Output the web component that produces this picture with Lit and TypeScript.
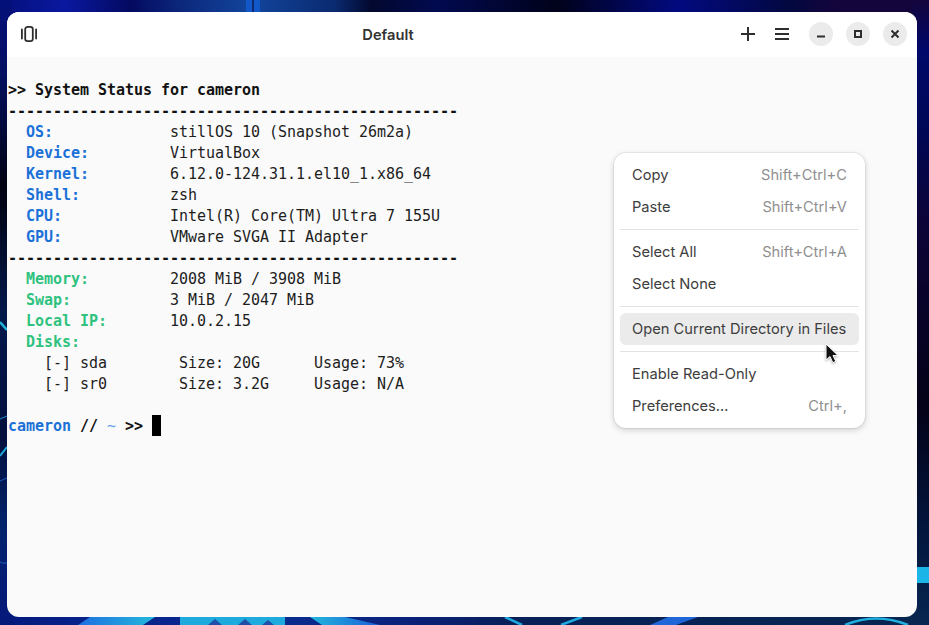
import { LitElement, html, css, svg } from "lit";
import { customElement } from "lit/decorators.js";

const blue = (t: string) => html`<span class="b">${t}</span>`;
const green = (t: string) => html`<span class="g">${t}</span>`;
const dash = "-".repeat(50);

const stops = (list: [number, string][]) =>
  list.map(([o, c]) => svg`<stop offset=${o} stop-color=${c}></stop>`);

@customElement("app-root")
export class AppRoot extends LitElement {
  static styles = css`
    :host { display: block; width: 929px; height: 625px; overflow: hidden; position: relative; background: #04103f; }
    .wall { position: absolute; inset: 0; width: 929px; height: 625px; }
    .page { position: relative; box-sizing: border-box; height: 625px; padding: 12px 12px 8px 7px; display: flex; }
    .window { flex: 1; display: flex; flex-direction: column; border-radius: 12px; overflow: hidden; background: #fafafa; position: relative; }
    .header { height: 45px; box-sizing: border-box; flex: none; background: #fff; display: flex; align-items: center; color: #2e2e2e; padding: 0 10px 1px 14px; }
    .title { flex: 1; padding: 2px 2px 0 0; text-align: center; font: 600 14.667px "Inter", sans-serif; color: #333; }
    .icon { display: block; }
    .plus { margin-right: 20px; }
    .menu-i { margin-right: 20px; }
    .circle { width: 24px; height: 24px; border-radius: 50%; background: #ebebeb; display: flex; align-items: center; justify-content: center; margin-right: 13px; }
    .circle.last { margin-right: 0; }
    pre { margin: 0; padding: 23px 0 0 1px; font: 15px/21px "DejaVu Sans Mono", monospace; color: #1d1d1d; letter-spacing: -0.03px; }
    .h { font-weight: 700; color: #111; }
    .b { color: #1c71d8; font-weight: 700; }
    .g { color: #2ec27e; font-weight: 700; }
    .t { color: #62a0ea; }
    .cursor { display: inline-block; width: 9px; height: 21px; margin-top: -1px; background: #000; vertical-align: top; }
    .popup { position: absolute; left: 607px; top: 141px; width: 251px; box-sizing: border-box; background: #fff; border-radius: 12px;
      padding: 6px; box-shadow: 0 0 0 1px rgba(0,0,0,.05), 0 2px 6px rgba(0,0,0,.18); font: 14.667px "Inter", sans-serif; color: #3d3d3d; }
    .item { height: 32px; box-sizing: border-box; padding: 0 12px 1px; display: flex; align-items: center; justify-content: space-between; border-radius: 6px; white-space: nowrap; }
    .item span { color: #8f8f8f; }
    .sep { height: 1px; background: #e3e3e3; margin: 6px 0; }
    .item.on { background: #ebebeb; }
    .pointer { position: absolute; left: 818px; top: 331px; width: 14px; height: 23px; filter: drop-shadow(0 1px 1px rgba(0,0,0,.3)); }
  `;

  render() {
    return html`
      <svg class="wall" viewBox="0 0 929 625" aria-hidden="true">
        ${svg`
          <defs>
            <linearGradient id="top">${stops([[0, "#04107a"], [0.07, "#0a18a0"], [0.14, "#040a60"], [0.2, "#0c2a7e"], [0.27, "#12459c"], [0.36, "#0a2a70"], [0.4, "#02082e"], [0.47, "#020a50"], [0.6, "#01021a"], [0.73, "#020a80"], [0.85, "#030840"], [0.9, "#14053c"], [1, "#14053c"]])}</linearGradient>
            <linearGradient id="bot">${stops([[0, "#05187a"], [0.08, "#06208a"], [0.3, "#0a2c90"], [0.45, "#0a2078"], [0.55, "#072058"], [1, "#072650"]])}</linearGradient>
            <linearGradient id="left" x1="0" y1="0" x2="0" y2="1">${stops([[0, "#04107a"], [0.12, "#041060"], [0.3, "#010210"], [0.5, "#03184a"], [0.7, "#03103e"], [0.85, "#03236e"], [1, "#05187a"]])}</linearGradient>
            <linearGradient id="right" x1="0" y1="0" x2="0" y2="1">${stops([[0, "#14053c"], [0.08, "#00086a"], [0.2, "#000858"], [0.35, "#0c0438"], [0.65, "#040218"], [0.85, "#03163e"], [1, "#072650"]])}</linearGradient>
            <linearGradient id="c1">${stops([[0, "#1d6fe0"], [1, "#24b8dc"]])}</linearGradient>
            <linearGradient id="c2">${stops([[0, "#22b6dc"], [1, "#1a5fd8"]])}</linearGradient>
          </defs>
          <rect x="0" y="0" width="929" height="16" fill="url(#top)"/>
          <rect x="0" y="612" width="929" height="13" fill="url(#bot)"/>
          <rect x="0" y="0" width="12" height="625" fill="url(#left)"/>
          <rect x="912" y="0" width="17" height="625" fill="url(#right)"/>
          <path d="M246 0h14v12h-14z" fill="#1358c8"/>
          <path d="M252 0h2v12h-2z" fill="#0c2a70"/>
          <path d="M0 322 L7 330" stroke="#22b4d8" stroke-width="2.5" fill="none"/>
          <path d="M0 419 L7 416" stroke="#1a8fd0" stroke-width="1" fill="none"/>
          <path d="M0 456 L7 447" stroke="#1ca8d8" stroke-width="2" fill="none"/>
          <path d="M7 478 Q2 480 0 481 M0 562 Q3 564 7 563" stroke="#1a5cb8" stroke-width="1" fill="none"/>
          <path d="M917 567 H929 V583 H917 Z" fill="#1cb5e8"/>
          <path d="M78 625 L90 617 H155 L143 625 Z" fill="url(#c1)"/>
          <path d="M180 617 H285 V625 H180 Z" fill="#1eaadc"/>
          <path d="M208 625 L215 619 L222 625 Z M238 625 L245 619 L252 625 Z M262 625 L268 620 L274 625 Z" fill="#1f4fa8"/>
          <path d="M310 617 H345 L380 625 H322 Z" fill="url(#c2)"/>
          <path d="M505 617 L522 625 M582 617 L561 625" stroke="#1ea8e0" stroke-width="2.5" fill="none"/>
          <path d="M650 625 L668 617 H698 L676 625 Z" fill="#1f66d8"/>
          <path d="M845 625 Q876 612 908 625" stroke="#1fb0e0" stroke-width="2.5" fill="none"/>
        `}
      </svg>
      <div class="page">
        <div class="window">
          <div class="header">
            <svg class="icon" width="16" height="16" viewBox="0 0 16 16" fill="none" stroke="#2e2e2e" stroke-width="1.8">
              <rect x="4.2" y="0.9" width="7.6" height="14.2" rx="2.4"/>
              <path d="M.9 3.5v9M15.1 3.5v9" stroke-linecap="round"/>
            </svg>
            <div class="title">Default</div>
            <svg class="icon plus" width="14" height="14" viewBox="0 0 14 14" stroke="#2e2e2e" stroke-width="2"><path d="M7 0v14M0 7h14"/></svg>
            <svg class="icon menu-i" width="14" height="14" viewBox="0 0 14 14" stroke="#2e2e2e" stroke-width="2"><path d="M0 2h14M0 7h14M0 12h14"/></svg>
            <div class="circle"><svg width="10" height="10" viewBox="0 0 10 10" stroke="#2e2e2e" stroke-width="2"><path d="M1 7.5h8"/></svg></div>
            <div class="circle"><svg width="10" height="10" viewBox="0 0 10 10" fill="none" stroke="#2e2e2e" stroke-width="2"><rect x="2" y="2" width="6" height="6"/></svg></div>
            <div class="circle last"><svg width="10" height="10" viewBox="0 0 10 10" stroke="#2e2e2e" stroke-width="2"><path d="M1.5 1.5l7 7M8.5 1.5l-7 7"/></svg></div>
          </div>
          <pre><span class="h">&gt;&gt; System Status for cameron
${dash}</span>
  ${blue("OS:")}             stillOS 10 (Snapshot 26m2a)
  ${blue("Device:")}         VirtualBox
  ${blue("Kernel:")}         6.12.0-124.31.1.el10_1.x86_64
  ${blue("Shell:")}          zsh
  ${blue("CPU:")}            Intel(R) Core(TM) Ultra 7 155U
  ${blue("GPU:")}            VMware SVGA II Adapter
<span class="h">${dash}</span>
  ${green("Memory:")}         2008 MiB / 3908 MiB
  ${green("Swap:")}           3 MiB / 2047 MiB
  ${green("Local IP:")}       10.0.2.15
  ${green("Disks:")}
    [-] sda        Size: 20G      Usage: 73%
    [-] sr0        Size: 3.2G     Usage: N/A

${blue("cameron")} <span class="h">//</span> <span class="t">~</span> <span class="h">&gt;&gt;</span> <span class="cursor"></span></pre>
          <div class="popup">
            <div class="item">Copy<span>Shift+Ctrl+C</span></div>
            <div class="item">Paste<span>Shift+Ctrl+V</span></div>
            <div class="sep"></div>
            <div class="item">Select All<span>Shift+Ctrl+A</span></div>
            <div class="item">Select None</div>
            <div class="sep"></div>
            <div class="item on">Open Current Directory in Files</div>
            <div class="sep"></div>
            <div class="item">Enable Read-Only</div>
            <div class="item">Preferences…<span>Ctrl+,</span></div>
          </div>
          <svg class="pointer" viewBox="0 0 14 23"><path d="M1 1v16l4-3.5 2.8 6.2 3-1.3-2.8-5.9h5z" fill="#111" stroke="#fff" stroke-width="1"/></svg>
        </div>
      </div>
    `;
  }
}
